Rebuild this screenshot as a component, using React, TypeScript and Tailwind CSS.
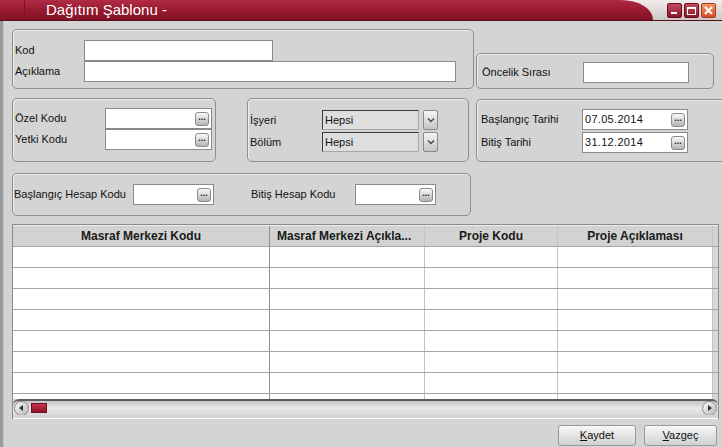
import React from "react";

const Dots = () => (
  <span className="w-[14px] h-[14px] shrink-0 rounded-[3px] border border-[#8c8c8c] bg-linear-to-b from-[#fafafa] to-[#b4b4b4] text-[#222] text-[9px] font-bold leading-[8px] text-center">
    ...
  </span>
);

const Box = ({ className, value, dots }: { className: string; value?: string; dots?: boolean }) => (
  <div className={`h-[21px] shrink-0 bg-white border border-[#8a8a8a] flex items-center justify-between pl-[2px] pr-[2px] ${className}`}>
    <span className="text-[11px] tracking-[0.3px] text-[#111]">{value}</span>
    {dots && <Dots />}
  </div>
);

const Chevron = () => (
  <span className="w-[15px] h-[20px] ml-[4px] shrink-0 rounded-[2px] border border-[#8a8a8a] bg-linear-to-b from-[#f6f6f6] to-[#c4c4c4] flex items-center justify-center">
    <svg width="8" height="6" viewBox="0 0 8 6">
      <path d="M1 1.5 L4 4.5 L7 1.5" fill="none" stroke="#3a4a60" strokeWidth="1.4" />
    </svg>
  </span>
);

const Select = ({ value }: { value: string }) => (
  <div className="h-[20px] w-[97px] shrink-0 bg-[#dedede] border border-t-[#3a3a3a] border-l-[#3a3a3a] border-b-[#a8a8a8] border-r-[#a8a8a8] flex items-center pl-[2px] text-[11px] text-[#111]">
    {value}
  </div>
);

const Group = ({ className, children }: { className: string; children: React.ReactNode }) => (
  <div className={`shrink-0 border border-[#8e8e8e] rounded-[5px] shadow-[inset_1px_1px_0_#ececec] flex flex-col ${className}`}>
    {children}
  </div>
);

const Row = ({ children, className = "" }: { children: React.ReactNode; className?: string }) => (
  <div className={`flex items-center ${className}`}>{children}</div>
);

const cols = [
  { w: "w-[257px] border-[#8c8c8c]", title: "Masraf Merkezi Kodu", align: "justify-center" },
  { w: "w-[155px] border-[#c4c4c4]", title: "Masraf Merkezi Açıkla...", align: "justify-start pl-[7px]" },
  { w: "w-[133px] border-[#c4c4c4]", title: "Proje Kodu", align: "justify-center" },
  { w: "w-[155px] border-[#c4c4c4]", title: "Proje Açıklaması", align: "justify-center" },
];

export default function App() {
  return (
    <div className="w-[722px] h-[447px] overflow-hidden bg-[#d4d4d4] flex flex-col font-['Liberation_Sans',Arial,sans-serif] text-[#111]">
      {/* title bar */}
      <div className="h-[21px] shrink-0 flex border-b border-[#5a0c18] bg-linear-to-b from-[#f4ecec] via-[#e2dada] to-[#c8c8c8]">
        <div className="w-[653px] h-full flex rounded-tr-[32px_20px] bg-linear-to-b from-[#b02c44] via-[#981a30] to-[#821224]">
          <div className="w-[25px] h-full border-r border-[#7c1022]" />
          <span className="ml-[21px] text-white text-[15px] leading-[20px]">Dağıtım Şablonu -</span>
        </div>
        <div className="ml-auto mr-[6px] mt-[3px] flex gap-[2px]">
          <span className="w-[15px] h-[15px] rounded-[2px] border border-[#6a0e1e] bg-linear-to-b from-[#c44a62] to-[#8a1428] flex items-end pl-[3px] pb-[3px]">
            <span className="w-[6px] h-[2px] bg-white" />
          </span>
          <span className="w-[15px] h-[15px] rounded-[2px] border border-[#6a0e1e] bg-linear-to-b from-[#c44a62] to-[#8a1428] flex items-center justify-center">
            <span className="w-[9px] h-[8px] border border-white border-t-2" />
          </span>
          <span className="w-[15px] h-[15px] rounded-[2px] border border-[#a83a1e] bg-linear-to-b from-[#f49a6a] to-[#d8482c] flex items-center justify-center">
            <svg width="9" height="9" viewBox="0 0 9 9">
              <path d="M1 1 L8 8 M8 1 L1 8" stroke="white" strokeWidth="2" />
            </svg>
          </span>
        </div>
      </div>

      {/* body */}
      <div className="flex-1 flex min-w-0">
        <div className="w-[4px] shrink-0 bg-[#9a9a9a] border-r border-[#c4c4c4]" />
        <div className="w-[718px] min-w-0 overflow-hidden flex flex-col text-[11px]">
          {/* row 1 */}
          <div className="flex items-start mt-[8px] ml-[8px]">
            <Group className="w-[462px] h-[60px] pt-[10px] pl-[2px]">
              <Row>
                <span className="w-[69px]">Kod</span>
                <Box className="w-[189px]" />
              </Row>
              <Row>
                <span className="w-[69px]">Açıklama</span>
                <Box className="w-[372px]" />
              </Row>
            </Group>
            <Group className="w-[238px] h-[36px] ml-[2px] mt-[24px] pt-[8px] pl-[5px]">
              <Row>
                <span className="w-[101px]">Öncelik Sırası</span>
                <Box className="w-[106px]" />
              </Row>
            </Group>
          </div>

          {/* row 2 */}
          <div className="flex items-start mt-[9px] ml-[8px]">
            <Group className="w-[204px] h-[64px] pt-[9px] pl-[2px]">
              <Row>
                <span className="w-[90px]">Özel Kodu</span>
                <Box className="w-[107px]" dots />
              </Row>
              <Row>
                <span className="w-[90px]">Yetki Kodu</span>
                <Box className="w-[107px]" dots />
              </Row>
            </Group>
            <Group className="w-[222px] h-[64px] ml-[31px] pt-[11px] pl-[2px] gap-[2px]">
              <Row>
                <span className="w-[72px]">İşyeri</span>
                <Select value="Hepsi" />
                <Chevron />
              </Row>
              <Row>
                <span className="w-[72px]">Bölüm</span>
                <Select value="Hepsi" />
                <Chevron />
              </Row>
            </Group>
            <Group className="w-[260px] h-[63px] ml-[7px] mt-[1px] pt-[9px] pl-[4px] gap-[2px] rounded-r-none">
              <Row>
                <span className="w-[101px]">Başlangıç Tarihi</span>
                <Box className="w-[106px]" value="07.05.2014" dots />
              </Row>
              <Row>
                <span className="w-[101px]">Bitiş Tarihi</span>
                <Box className="w-[106px]" value="31.12.2014" dots />
              </Row>
            </Group>
          </div>

          {/* row 3 */}
          <div className="flex mt-[11px] ml-[8px]">
            <Group className="w-[459px] h-[43px] pt-[10px] pl-[1px]">
              <Row>
                <span className="w-[119px]">Başlangıç Hesap Kodu</span>
                <Box className="w-[81px]" dots />
                <span className="w-[104px] ml-[37px]">Bitiş Hesap Kodu</span>
                <Box className="w-[81px]" dots />
              </Row>
            </Group>
          </div>

          {/* grid */}
          <div className="ml-[8px] mt-[8px] w-[707px] border border-b-0 border-[#8a8a8a] flex flex-col">
            <div className="flex h-[21px] bg-[#d2d2d2] border-t border-[#eeeeee]">
              {cols.map((c) => (
                <div key={c.title} className={`${c.w} border-r flex items-center overflow-hidden whitespace-nowrap ${c.align} text-[12px] font-bold text-[#1a1a1a]`}>
                  {c.title}
                </div>
              ))}
              <div className="w-[5px]" />
            </div>
            {[0, 1, 2, 3, 4, 5, 6].map((r) => (
              <div key={r} className="flex h-[21px] border-t border-[#a4a4a4]">
                {cols.map((c) => (
                  <div key={c.title} className={`${c.w} border-r bg-white`} />
                ))}
                <div className="w-[5px] bg-[#d8d8d8]" />
              </div>
            ))}
            <div className="flex h-[6px] border-t border-[#a4a4a4]">
              {cols.map((c) => (
                <div key={c.title} className={`${c.w} border-r bg-white`} />
              ))}
              <div className="w-[5px] bg-[#d8d8d8]" />
            </div>
            {/* scrollbar */}
            <div className="h-[16px] flex items-center bg-linear-to-b from-[#c4c4c4] via-[#e8e8e8] to-[#dadada] border-t-2 border-[#5c5c5c] rounded-t-[6px]">
              <span className="w-[15px] h-[15px] ml-[1px] rounded-full border border-[#8a8a8a] bg-linear-to-br from-[#fafafa] to-[#b8b8b8] flex items-center justify-center">
                <svg width="5" height="6" viewBox="0 0 5 6">
                  <path d="M4 0 L0 3 L4 6 Z" fill="#333" />
                </svg>
              </span>
              <span className="w-[16px] h-[10px] ml-[2px] bg-linear-to-b from-[#c8364e] to-[#8a1428] border border-[#6a0e1e]" />
              <span className="flex-1" />
              <span className="w-[15px] h-[15px] mr-[1px] rounded-full border border-[#8a8a8a] bg-linear-to-br from-[#fafafa] to-[#b8b8b8] flex items-center justify-center">
                <svg width="5" height="6" viewBox="0 0 5 6">
                  <path d="M1 0 L5 3 L1 6 Z" fill="#333" />
                </svg>
              </span>
            </div>
            <div className="h-[4px] bg-[#d4d4d4] border-b border-white" />
          </div>

          {/* buttons */}
          <div className="flex justify-end mt-[6px] mr-[5px] gap-[8px]">
            <div className="w-[78px] h-[21px] rounded-[3px] border border-[#9a9a9a] bg-linear-to-b from-[#f8f8f8] to-[#d0d0d0] flex items-center justify-center text-[11px]">
              <span><span className="underline">K</span>aydet</span>
            </div>
            <div className="w-[73px] h-[21px] rounded-[3px] border border-[#9a9a9a] bg-linear-to-b from-[#f8f8f8] to-[#d0d0d0] flex items-center justify-center text-[11px]">
              <span><span className="underline">V</span>azgeç</span>
            </div>
          </div>
        </div>
      </div>
    </div>
  );
}
